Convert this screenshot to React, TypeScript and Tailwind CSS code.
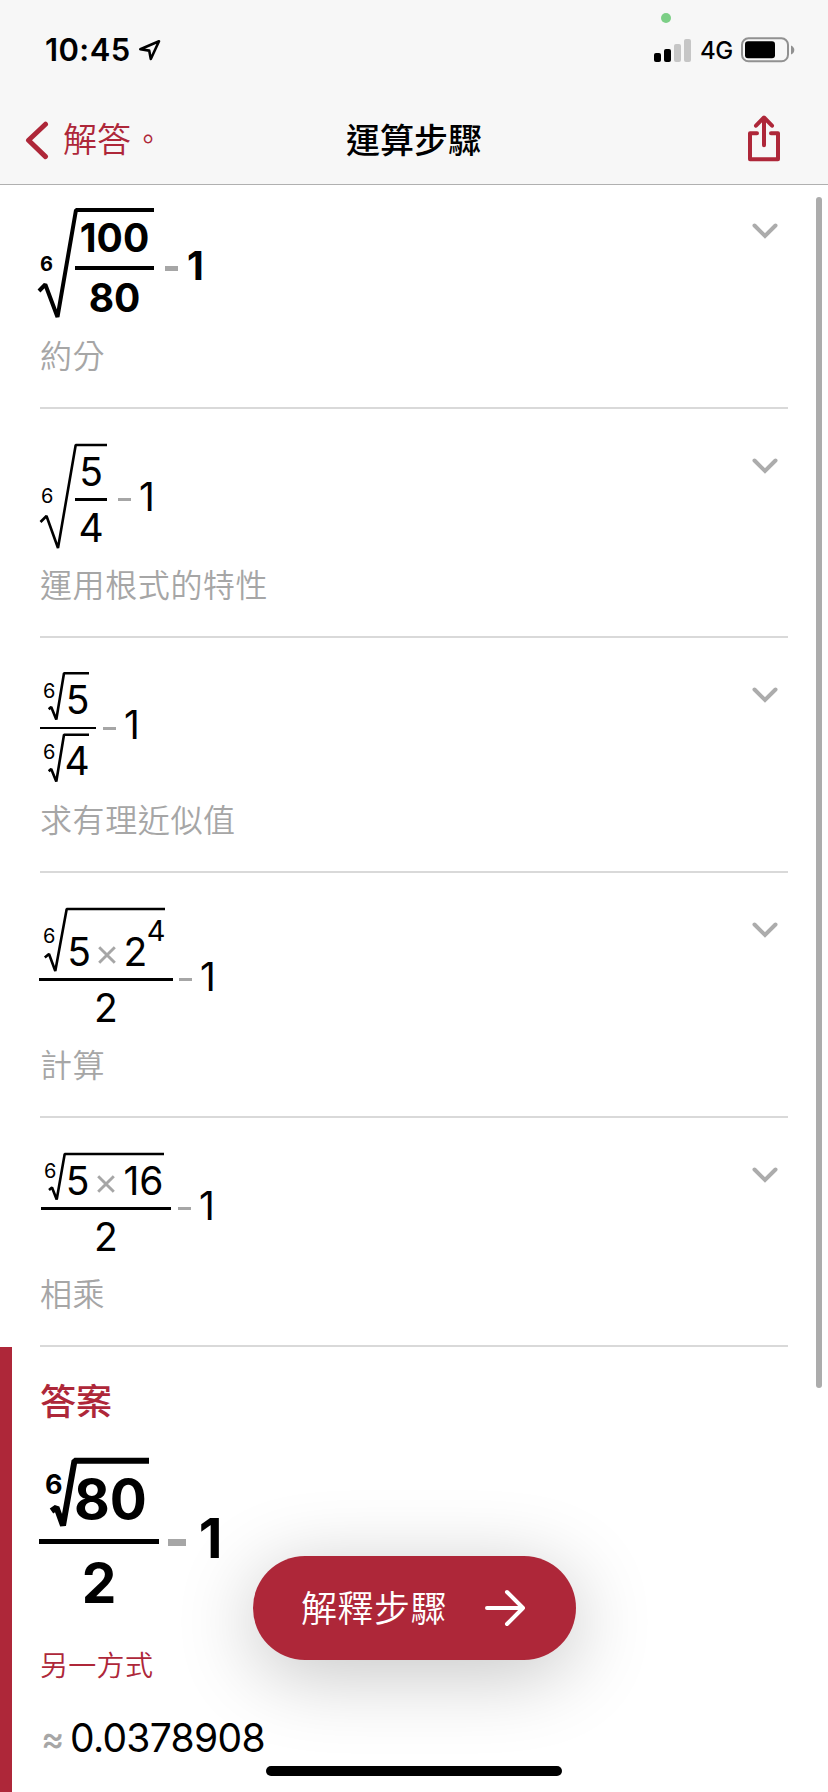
import React from 'react';
import clsx from 'clsx';

const CJK = "font-['Noto_Sans_CJK_TC',sans-serif]";

const Num = ({ className, children }: { className?: string; children: React.ReactNode }) => (
  <span
    className={clsx(
      'flex h-7 shrink-0 items-center justify-center whitespace-nowrap text-[39px] leading-7',
      className
    )}
  >
    {children}
  </span>
);

const Minus = ({ className }: { className: string }) => (
  <span aria-label="-" className={clsx('shrink-0 bg-[#a6a6a6]', className)} />
);

const Times = ({ className }: { className: string }) => (
  <svg viewBox="0 0 18 18" className={clsx('h-[18px] w-[18px] shrink-0', className)}>
    <path d="M1.2 1.2 L16.8 16.8 M16.8 1.2 L1.2 16.8" stroke="#a6a6a6" strokeWidth="2.9" />
  </svg>
);

interface RadicalProps {
  path: string;
  stroke: number;
  index: string;
  className: string;
  children: React.ReactNode;
}

// Root sign is drawn behind the radicand, the small 6 sits over its hook
const Radical = ({ path, stroke, index, className, children }: RadicalProps) => (
  <div className={clsx('relative shrink-0', className)}>
    <svg className="absolute inset-0 h-full w-full overflow-visible">
      <path d={path} fill="none" stroke="#000" strokeWidth={stroke} strokeLinejoin="bevel" />
    </svg>
    <span className={clsx('absolute leading-none', index)}>6</span>
    {children}
  </div>
);

interface StepProps {
  label: string;
  className: string;
  children: React.ReactNode;
}

const Step = ({ label, className, children }: StepProps) => (
  <section className={clsx('mx-10 flex flex-col justify-between border-b-2 border-[#d9d9d9] pb-[37px]', className)}>
    <div className="flex items-start justify-between">
      <div className="flex items-start">{children}</div>
      <svg viewBox="0 0 26 16" className="mr-[10px] mt-[15px] h-4 w-[26px]">
        <path d="M2.5 2.5 L13 13 L23.5 2.5" fill="none" stroke="#acacac" strokeWidth="4" strokeLinecap="round" />
      </svg>
    </div>
    <p className={clsx('text-[32px] font-[350] leading-8 tracking-[0.6px] text-[#a6a6a6]', CJK)}>{label}</p>
  </section>
);

const StatusBar = () => (
  <div className="flex h-[96px] items-start justify-between pl-[45px] pr-[33px] pt-[34px]">
    <div className="flex h-8 items-center">
      <span className="w-[85px] whitespace-nowrap text-[31px] font-semibold leading-8 tracking-[0.4px]">10:45</span>
      <svg viewBox="0 0 24 24" className="ml-[7px] h-6 w-6">
        <path d="M22 3.3 L13.8 21 L12.2 12.6 L3.3 11.2 Z" fill="none" stroke="#000" strokeWidth="2.6" strokeLinejoin="round" />
      </svg>
    </div>
    <div className="relative flex h-8 items-center">
      <span className="absolute -top-[21px] left-[7px] h-[10px] w-[10px] rounded-full bg-[#7ccf86]" />
      <div className="flex h-[23px] items-end gap-[3px]">
        <i className="h-[9px] w-[7px] rounded-[2px] bg-black" />
        <i className="h-[13px] w-[7px] rounded-[2px] bg-black" />
        <i className="h-[18px] w-[7px] rounded-[2px] bg-[#c6c6c6]" />
        <i className="h-[23px] w-[7px] rounded-[2px] bg-[#c6c6c6]" />
      </div>
      <span className="ml-[9px] mt-px w-[32px] text-[24px] font-medium leading-8 tracking-[-0.5px]">4G</span>
      <svg viewBox="0 0 54 26" className="ml-[9px] h-[26px] w-[54px]">
        <rect x="1" y="1.3" width="46" height="23" rx="6.5" fill="none" stroke="#919191" strokeWidth="2" />
        <rect x="4" y="4.3" width="30" height="17" rx="3" />
        <path d="M50 8.5 Q53.3 10 53.3 13 Q53.3 16 50 17.5 Z" fill="#919191" />
      </svg>
    </div>
  </div>
);

const NavBar = () => (
  <div className={clsx('grid h-[88px] grid-cols-[1fr_auto_1fr] items-center text-[34px]', CJK)}>
    <div className="flex items-center pl-6 text-[#ae2739]">
      <svg viewBox="0 0 26 40" className="h-10 w-[26px]">
        <path d="M21.5 4.2 L4.5 20.2 L21.5 36.6" fill="none" stroke="currentColor" strokeWidth="5" strokeLinecap="round" strokeLinejoin="round" />
      </svg>
      <span className="-mt-[3px] ml-[13px] font-[350] leading-10">
        解答<span className="mx-[3px] inline-block -translate-y-0.5 text-[28px] font-normal">。</span>
      </span>
    </div>
    <h1 className="-mt-[3px] font-medium leading-10">運算步驟</h1>
    <svg viewBox="0 0 36 50" className="-mt-1 mr-[46px] h-[50px] w-9 justify-self-end">
      <g fill="none" stroke="#ae2739" strokeWidth="4" strokeLinecap="round" strokeLinejoin="round">
        <path d="M11 20.3 H4 V46.3 H32 V20.3 H25" />
        <path d="M18 5 V32.3 M10 12.7 L18 4.5 L26 12.7" />
      </g>
    </svg>
  </div>
);

export default function App() {
  return (
    <div className="relative h-[1792px] w-[828px] overflow-hidden bg-white font-['Inter',sans-serif] text-black">
      <header className="h-[185px] border-b border-[#b0b0b0] bg-[#f7f7f7]">
        <StatusBar />
        <NavBar />
      </header>

      <main>
        <Step label="約分" className="h-[224px] pt-[23px] font-bold">
          <Radical
            path="M-1 83 L5.3 76.5 L17.5 109 L36 2 H114"
            stroke={4}
            index="left-0 top-[46px] text-[20px]"
            className="h-[110px] w-[114px] pl-[35px] pt-4"
          >
            <Num>100</Num>
            <div className="mb-[14px] mt-[14px] h-1 bg-black" />
            <Num>80</Num>
          </Radical>
          <Minus className="ml-[11px] mt-[58px] h-[5px] w-[13px]" />
          <Num className="ml-[10px] mt-11 w-[15px]">1</Num>
        </Step>

        <Step label="運用根式的特性" className="h-[229px] pt-[34px]">
          <Radical
            path="M0.5 79 L6.5 73 L18 105 L35.7 2 H67"
            stroke={2.6}
            index="left-[1px] top-[43px] text-[20px]"
            className="h-[107px] w-[67px] pl-[35px] pt-[15px]"
          >
            <Num>5</Num>
            <div className="mb-[13px] mt-[12px] h-[3px] bg-black" />
            <Num>4</Num>
          </Radical>
          <Minus className="ml-[11px] mt-[55px] h-[3px] w-[13px]" />
          <Num className="ml-[10px] mt-10 w-3">1</Num>
        </Step>

        <Step label="求有理近似值" className="h-[235px] pt-[34px]">
          <div className="w-14">
            <Radical
              path="M8.7 37.3 L11.2 35 L16.3 47.5 L24 1.3 H49"
              stroke={2.6}
              index="left-[3px] top-[9px] text-[20px]"
              className="h-[55px] w-[49px] pl-[26px] pt-[14px]"
            >
              <Num>5</Num>
            </Radical>
            <div className="h-0.5 bg-black" />
            <Radical
              path="M8.7 42.3 L11.2 40 L16.3 52.5 L24 5.7 H49"
              stroke={2.6}
              index="left-[3px] top-[13px] text-[20px]"
              className="h-[55px] w-[49px] pl-[25px] pt-[18px]"
            >
              <Num>4</Num>
            </Radical>
          </div>
          <Minus className="ml-[7px] mt-[55px] h-[3px] w-[13px]" />
          <Num className="ml-[10px] mt-[39px] w-3">1</Num>
        </Step>

        <Step label="計算" className="h-[245px] pt-[34px]">
          <div className="-ml-px flex w-[134px] flex-col">
            <Radical
              path="M5.8 50.5 L10 47 L16.3 64 L27.7 2 H126"
              stroke={2.6}
              index="left-1 top-[19px] text-[20px]"
              className="flex h-[71px] w-[126px] items-start pl-[30px] pt-[31px]"
            >
              <Num className="w-5">5</Num>
              <Times className="ml-[9px] mt-2" />
              <Num className="ml-[10px] w-[19px]">2</Num>
              <span className="-mt-[18px] ml-[2px] flex h-[22px] w-[18px] items-center justify-center text-[29px] leading-[22px]">4</span>
            </Radical>
            <div className="mb-[13px] h-[3px] bg-black" />
            <Num>2</Num>
          </div>
          <Minus className="ml-[6px] mt-[71px] h-[3px] w-[13px]" />
          <Num className="ml-[10px] mt-14 w-3">1</Num>
        </Step>

        <Step label="相乘" className="h-[229px] pt-[34px]">
          <div className="ml-px flex w-[130px] flex-col">
            <Radical
              path="M8 38 L11 35.5 L15.7 47.5 L23.7 2 H123"
              stroke={2.6}
              index="left-[3px] top-[9px] text-[20px]"
              className="flex h-[55px] w-[123px] items-start pl-[27px] pt-[15px]"
            >
              <Num className="w-[19px]">5</Num>
              <Times className="ml-[10px] mt-2" />
              <Num className="ml-[9px] w-[39px]">16</Num>
            </Radical>
            <div className="mb-[13px] h-[3px] bg-black" />
            <Num>2</Num>
          </div>
          <Minus className="ml-[7px] mt-[55px] h-[3px] w-[13px]" />
          <Num className="ml-[10px] mt-10 w-3">1</Num>
        </Step>

        <section className="h-[445px] border-l-12 border-[#ae2739] pl-7 pt-[34px]">
          <h2 className={clsx('text-[36px] font-medium leading-9 text-[#ae2739]', CJK)}>答案</h2>
          <div className="mt-[39px] flex items-start font-bold">
            <div className="-ml-px w-[120px]">
              <Radical
                path="M12.5 55 L17.5 51.5 L24 69.5 L35.5 4.7 H110"
                stroke={6}
                index="left-[6px] top-[15px] text-[27px]"
                className="h-[83px] w-[110px] pl-[37px] pt-[23px]"
              >
                <span className="flex h-10 w-[69px] items-center justify-center text-[55px] leading-10">80</span>
              </Radical>
              <div className="h-[5px] bg-black" />
              <span className="mt-[19px] flex h-10 items-center justify-center text-[55px] leading-10">2</span>
            </div>
            <Minus className="ml-[9px] mt-[83px] h-[7px] w-[18px]" />
            <span className="ml-[15px] mt-[62px] flex h-10 w-[19px] items-center justify-center text-[55px] leading-10">1</span>
          </div>
          <p className={clsx('mt-[47px] text-[28px] font-[350] leading-7 tracking-[0.3px] text-[#ae2739]', CJK)}>另一方式</p>
          <div className="mt-[46px] flex items-center text-[39px] leading-7">
            <span className="w-[30px] pl-px text-[35px] font-medium text-[#a6a6a6]">≈</span>
            <span className="tracking-[-0.7px]">0.0378908</span>
          </div>
        </section>
      </main>

      {/* Scroll indicator */}
      <div className="absolute right-[6px] top-[197px] h-[1191px] w-[6px] rounded-full bg-[#acacac]" />

      <button className="absolute left-[253px] top-[1556px] flex h-[104px] w-[323px] items-center justify-between rounded-full bg-[#ae2739] pl-12 pr-[50px] text-white shadow-[0_14px_80px_rgba(0,0,0,0.23)]">
        <span className={clsx('-mt-1 whitespace-nowrap text-[36px] font-[350] leading-10 tracking-[0.5px]', CJK)}>解釋步驟</span>
        <svg viewBox="0 0 42 40" className="h-10 w-[42px]">
          <path d="M3 20 H39 M23 4 L39 20 L23 36" fill="none" stroke="currentColor" strokeWidth="4" strokeLinecap="round" strokeLinejoin="round" />
        </svg>
      </button>

      {/* Home indicator */}
      <div className="absolute bottom-4 left-[266px] h-[10px] w-[296px] rounded-full bg-black" />
    </div>
  );
}
